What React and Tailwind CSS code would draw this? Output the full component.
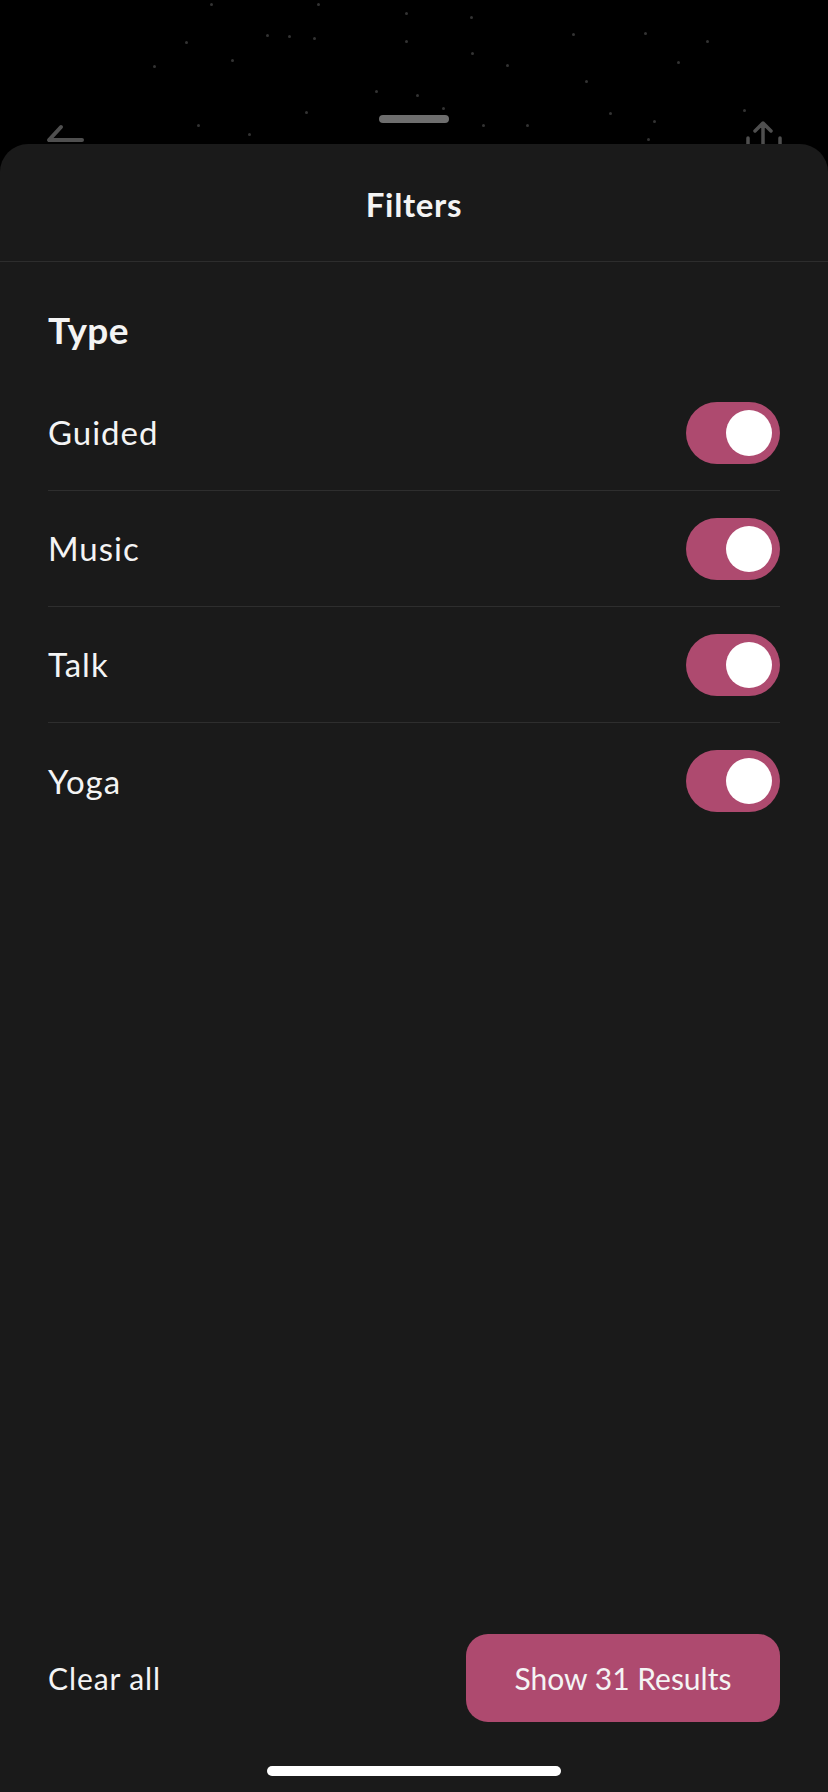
const stars = [
  [210, 3], [317, 3], [288, 35], [313, 37], [405, 40], [471, 52], [506, 64], [572, 33],
  [644, 32], [706, 40], [677, 61], [585, 80], [153, 65], [231, 59], [185, 41], [305, 111],
  [375, 90], [416, 94], [442, 107], [197, 124], [248, 133], [482, 124], [526, 124],
  [609, 112], [653, 120], [647, 138], [743, 109], [266, 34], [405, 12], [470, 16],
];

const types = ["Guided", "Music", "Talk", "Yoga"];

function Toggle() {
  return (
    <div className="flex h-[62px] w-[94px] items-center justify-end rounded-full bg-[#ae4a6f] pr-[8px]">
      <div className="h-[46px] w-[46px] rounded-full bg-white" />
    </div>
  );
}

export default function App() {
  return (
    <div className="flex h-[1792px] w-[828px] flex-col bg-black font-['Lato',sans-serif] text-[#f4f4f4]">
      <div className="relative h-[144px] shrink-0">
        {stars.map(([x, y], i) => (
          <span
            key={i}
            className="absolute h-[3px] w-[3px] rounded-full bg-[#333333]"
            style={{ left: x, top: y }}
          />
        ))}
        <div className="absolute left-[379px] top-[115px] h-[8px] w-[70px] rounded-full bg-[#6e6e6e]" />
        <svg className="absolute left-[44px] top-[124px]" width="42" height="20" viewBox="0 0 42 20">
          <path d="M17 3 L5 16 L38 16" fill="none" stroke="#4f4f4f" strokeWidth="4" strokeLinecap="round" strokeLinejoin="round" />
        </svg>
        <svg className="absolute left-[744px] top-[120px]" width="40" height="24" viewBox="0 0 40 24">
          <path d="M19 24 L19 3 M11 11 L19 3 L27 11 M4 18 L4 24 M36 18 L36 24" fill="none" stroke="#4f4f4f" strokeWidth="3.5" strokeLinecap="round" strokeLinejoin="round" />
        </svg>
      </div>

      <div className="flex flex-1 flex-col rounded-t-[28px] bg-[#1a1a1a]">
        <div className="flex h-[118px] items-center justify-center border-b border-[#2d2d2d] pt-[4px]">
          <h1 className="text-[33px] font-bold leading-none tracking-[0.02em]">Filters</h1>
        </div>

        <div className="flex-1 px-[48px]">
          <h2 className="pt-[50px] pb-[28px] text-[37px] font-bold leading-[35px] tracking-[0.01em]">Type</h2>
          <div className="flex flex-col">
            {types.map((t, i) => (
              <div
                key={t}
                className={
                  i < types.length - 1
                    ? "flex h-[116px] items-center justify-between border-b border-[#2e2e2e]"
                    : "flex h-[116px] items-center justify-between"
                }
              >
                <span className="text-[33px] leading-none tracking-[0.03em]">{t}</span>
                <Toggle />
              </div>
            ))}
          </div>
        </div>

        <div className="flex items-center justify-between px-[48px]">
          <button className="text-[30px] leading-none tracking-[0.03em] text-[#f4f4f4]">Clear all</button>
          <button className="flex h-[88px] w-[314px] items-center justify-center rounded-[22px] bg-[#ae4a6f] text-[30px] leading-none text-[#f4f4f4]">
            Show 31 Results
          </button>
        </div>
        <div className="mt-[44px] mb-[16px] flex justify-center">
          <div className="h-[10px] w-[294px] rounded-full bg-white" />
        </div>
      </div>
    </div>
  );
}
